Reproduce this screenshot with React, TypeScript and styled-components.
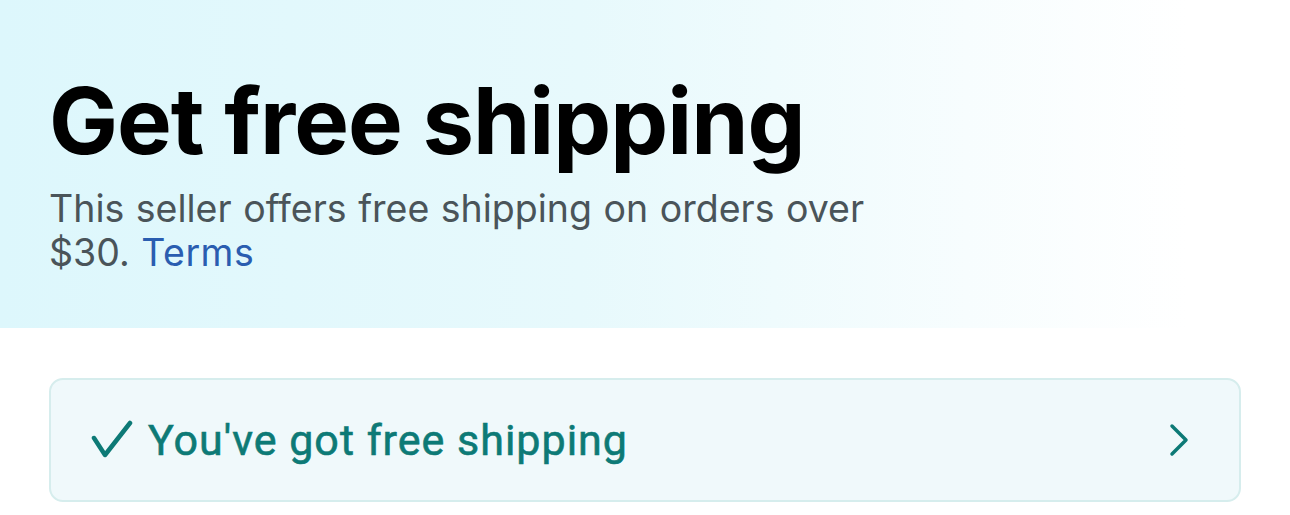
import React from "react";
import styled, { createGlobalStyle } from "styled-components";

const Global = createGlobalStyle`
  html, body { margin: 0; padding: 0; background: #ffffff; }
  body { font-family: Inter, "Noto Sans", sans-serif; }
`;

const Page = styled.div`
  width: 1290px;
  height: 515px;
  display: flex;
  flex-direction: column;
  background: #ffffff;
  overflow: hidden;
`;

const Hero = styled.header`
  height: 328px;
  box-sizing: border-box;
  padding: 71px 50px 0 49px;
  background: linear-gradient(90deg, #ddf7fc 0%, #e7f9fc 45%, #f7fdfe 75%, #ffffff 92%);
`;

const Title = styled.h1`
  margin: 0;
  font-family: Inter, sans-serif;
  font-weight: 700;
  font-size: 92px;
  line-height: 100px;
  letter-spacing: -1px;
  color: #000000;
`;

const Subtitle = styled.p`
  margin: 16px 0 0 0;
  width: 830px;
  font-family: Inter, sans-serif;
  font-weight: 400;
  font-size: 37.5px;
  line-height: 44px;
  word-spacing: 1px;
  color: #4a5459;
`;

const TermsLink = styled.a`
  color: #2a5db0;
  text-decoration: none;
  letter-spacing: 0.5px;
`;

const Body = styled.main`
  padding: 50px 49px 0 49px;
`;

const ShippingCard = styled.button`
  width: 100%;
  height: 124px;
  box-sizing: border-box;
  display: flex;
  align-items: center;
  gap: 15px;
  padding: 0 50px 0 40px;
  background: #f0f9fb;
  border: 2px solid #d6eded;
  border-radius: 14px;
  cursor: pointer;
  color: #0d7a76;
`;

const CardLabel = styled.span`
  flex: 1;
  text-align: left;
  font-family: Roboto, sans-serif;
  font-size: 43px;
  font-weight: 400;
  letter-spacing: 1px;
  color: #0d7a76;
  -webkit-text-stroke: 0.6px #0d7a76;
`;

const Check = () => (
  <svg width="42" height="40" viewBox="0 0 42 40" fill="none">
    <path d="M3 18 L14 35 L39 3" stroke="#0d7a76" strokeWidth="4.5" strokeLinecap="round" strokeLinejoin="round" />
  </svg>
);

const Chevron = () => (
  <svg width="20" height="34" viewBox="0 0 20 34" fill="none">
    <path d="M3 3 L17 17 L3 31" stroke="#0d7a76" strokeWidth="3.5" strokeLinecap="round" strokeLinejoin="round" />
  </svg>
);

export default function App() {
  return (
    <Page>
      <Global />
      <Hero>
        <Title>Get free shipping</Title>
        <Subtitle>
          This seller offers free shipping on orders over $30. <TermsLink href="#">Terms</TermsLink>
        </Subtitle>
      </Hero>
      <Body>
        <ShippingCard>
          <Check />
          <CardLabel>You've got free shipping</CardLabel>
          <Chevron />
        </ShippingCard>
      </Body>
    </Page>
  );
}
